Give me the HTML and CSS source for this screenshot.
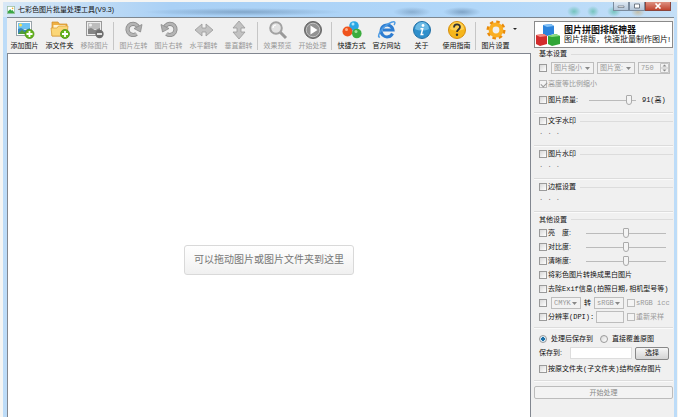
FILE: index.html
```html
<!DOCTYPE html>
<html lang="zh-CN">
<head>
    <meta charset="UTF-8">
    <meta name="viewport" content="width=device-width, initial-scale=1.0">
    <title>七彩色图片批量处理工具(V9.3)</title>
    <link rel="stylesheet" href="styles.css">
</head>
<body>
    <div class="window">
        <header class="titlebar">
            <svg class="app-icon" viewBox="0 0 10 10"><rect x="0.5" y="0.5" width="9" height="9" fill="#fff" stroke="#9cc0a4"/><path d="M1 7l3-3 2 2 1-1 2 3v1H1z" fill="#39a845"/><circle cx="7" cy="3" r="1" fill="#e9b32c"/></svg>
            <h1 class="title">七彩色图片批量处理工具(V9.3)</h1>
            <div class="window-buttons">
                <button class="win-btn" aria-label="最小化"><svg viewBox="0 0 8 6"><path d="M1 3h6v1.500H1z" fill="#fff" stroke="#56606c" stroke-width=".6"/></svg></button>
                <button class="win-btn" aria-label="最大化"><svg viewBox="0 0 8 6"><path d="M1.500 1h5v4h-5z" fill="#fff" stroke="#56606c" stroke-width=".8"/></svg></button>
                <button class="win-btn win-close" aria-label="关闭"><svg viewBox="0 0 8 6"><path d="M1.500 .5l5 5M6.500 .5l-5 5" stroke="#fff" stroke-width="1.600"/></svg></button>
            </div>
        </header>

        <div class="client">
            <main class="main">
                <nav class="toolbar">
                    <button class="tool">
                        <svg viewBox="0 0 20 20"><rect x="1.500" y="1.500" width="15" height="14" fill="#fff" stroke="#9aa4aa"/><path d="M3 3h12v6H3z" fill="#6fc3f2"/><circle cx="5.500" cy="5" r="1.500" fill="#ffe14d"/><path d="M3 14V9l3-1 4 2 5-2v6z" fill="#3b87b8"/><path d="M3 14l4-4 5 4z" fill="#4e9d3a"/><circle cx="14.500" cy="14" r="4.500" fill="#64b51c" stroke="#438b10" stroke-width=".7"/><path d="M14.500 11v6M11.500 14h6" stroke="#fff" stroke-width="1.800"/></svg>
                        <span>添加图片</span>
                    </button>
                    <button class="tool">
                        <svg viewBox="0 0 20 20"><path d="M2 4V2h6l1.500 2H17v12H2z" fill="#efb044" stroke="#cf8e28" stroke-width=".7"/><path d="M3.500 5h12v5h-12z" fill="#fff3cf"/><path d="M1 8h6l1.500-2H18l-1 10H2z" fill="#fbd678" stroke="#d99c34" stroke-width=".7"/><circle cx="15" cy="14" r="4.500" fill="#64b51c" stroke="#438b10" stroke-width=".7"/><path d="M15 11v6M12 14h6" stroke="#fff" stroke-width="1.800"/></svg>
                        <span>添文件夹</span>
                    </button>
                    <button class="tool" disabled>
                        <svg viewBox="0 0 20 20"><rect x="1.500" y="1.500" width="15" height="14" fill="#eee" stroke="#999"/><path d="M3 3h12v6H3z" fill="#bdbdbd"/><circle cx="5.500" cy="5" r="1.500" fill="#eee"/><path d="M3 14V9l3-1 4 2 5-2v6z" fill="#858585"/><circle cx="14.500" cy="14" r="4.200" fill="#6e6e6e"/><path d="M12 14h5" stroke="#fff" stroke-width="1.600"/></svg>
                        <span>移除图片</span>
                    </button>
                    <span class="separator"></span>
                    <button class="tool" disabled>
                        <svg viewBox="0 0 20 20"><path d="M13.600 12.800A5.600 5.600 0 1 1 14 6.500" fill="none" stroke="#8a8a8a" stroke-width="4.200" transform="rotate(14 9 9)"/><path d="M13.600 12.800A5.600 5.600 0 1 1 14 6.500" fill="none" stroke="#b4b4b4" stroke-width="2.600" transform="rotate(14 9 9)"/><path d="M18 4.500l-1.500 7.500-6.500-3.500z" fill="#aeaeae" stroke="#8a8a8a" stroke-width=".8"/></svg>
                        <span>图片左转</span>
                    </button>
                    <button class="tool" disabled>
                        <svg viewBox="0 0 20 20"><g transform="matrix(-1 0 0 1 20 0)"><path d="M13.600 12.800A5.600 5.600 0 1 1 14 6.500" fill="none" stroke="#8a8a8a" stroke-width="4.200" transform="rotate(14 9 9)"/><path d="M13.600 12.800A5.600 5.600 0 1 1 14 6.500" fill="none" stroke="#b4b4b4" stroke-width="2.600" transform="rotate(14 9 9)"/><path d="M18 4.500l-1.500 7.500-6.500-3.500z" fill="#aeaeae" stroke="#8a8a8a" stroke-width=".8"/></g></svg>
                        <span>图片右转</span>
                    </button>
                    <button class="tool" disabled>
                        <svg viewBox="0 0 20 20"><path d="M1 10l7-6v4h4V4l7 6-7 6v-4H8v4z" fill="#c2c2c2" stroke="#999" stroke-width=".8"/></svg>
                        <span>水平翻转</span>
                    </button>
                    <button class="tool" disabled>
                        <svg viewBox="0 0 20 20"><path d="M10 1l6 7h-4v4h4l-6 7-6-7h4V8H4z" fill="#c2c2c2" stroke="#999" stroke-width=".8"/></svg>
                        <span>垂直翻转</span>
                    </button>
                    <span class="separator"></span>
                    <button class="tool" disabled>
                        <svg viewBox="0 0 20 20"><path d="M12 12l6 6" stroke="#999" stroke-width="3"/><circle cx="8" cy="8" r="5.800" fill="#e2e2e2" stroke="#a2a2a2" stroke-width="2"/><path d="M5 8a3 3 0 0 1 3-3" fill="none" stroke="#fff" stroke-width="1.200"/></svg>
                        <span>效果预览</span>
                    </button>
                    <button class="tool" disabled>
                        <svg viewBox="0 0 20 20"><circle cx="10" cy="10" r="8.500" fill="#777" stroke="#666"/><circle cx="10" cy="10" r="6.800" fill="#929292" stroke="#c4c4c4"/><path d="M7.500 5.500v9l7-4.500z" fill="#fff"/></svg>
                        <span>开始处理</span>
                    </button>
                    <span class="separator"></span>
                    <button class="tool">
                        <svg viewBox="0 0 20 20"><circle cx="12" cy="6" r="4.800" fill="#2aa7e4"/><circle cx="11" cy="4" r="1.500" fill="#a7e4ff"/><circle cx="5.500" cy="11.500" r="5" fill="#f0531c"/><circle cx="4.500" cy="9.500" r="1.500" fill="#ffb08a"/><circle cx="14.800" cy="13.500" r="4.800" fill="#3cac3e"/><circle cx="14" cy="11.500" r="1.500" fill="#a8e29a"/></svg>
                        <span>快捷方式</span>
                    </button>
                    <button class="tool">
                        <svg viewBox="0 0 20 20"><path d="M15.500 13.500A6 6 0 1 1 16 10H6" fill="none" stroke="#2e7dd1" stroke-width="3"/><path d="M3 17C-1 18 4 8 11 4s8-2 6 1" fill="none" stroke="#4d9be4" stroke-width="1.500"/></svg>
                        <span>官方网站</span>
                    </button>
                    <button class="tool">
                        <svg viewBox="0 0 20 20"><circle cx="10" cy="10" r="8.500" fill="#2f8fcb" stroke="#216fa5"/><path d="M3 9a7 7 0 0 1 14 0c-4 2-10 2-14 0z" fill="#6bb9e4"/><circle cx="11" cy="5.500" r="1.400" fill="#fff"/><path d="M8.500 8.800h2.200l-1.500 5.700h2.300" fill="none" stroke="#fff" stroke-width="1.500"/></svg>
                        <span>关于</span>
                    </button>
                    <button class="tool">
                        <svg viewBox="0 0 20 20"><circle cx="10" cy="10" r="8.500" fill="#f6b61b" stroke="#d68e0c"/><path d="M3 9a7 7 0 0 1 14 0c-4 2-10 2-14 0z" fill="#ffd152"/><path d="M7 7.500c0-4 6-4 6-.5 0 2.500-3 2.500-3 5" fill="none" stroke="#333" stroke-width="1.800"/><circle cx="10" cy="14.800" r="1.200" fill="#333"/></svg>
                        <span>使用指南</span>
                    </button>
                    <span class="separator"></span>
                    <button class="tool tool-menu">
                        <svg viewBox="0 0 20 20"><circle cx="10" cy="10" r="7.500" fill="none" stroke="#e98a0b" stroke-width="4" stroke-dasharray="3.200 2.690"/><circle cx="10" cy="10" r="5.400" fill="none" stroke="#faae22" stroke-width="4"/></svg>
                        <span>图片设置</span>
                    </button>
                </nav>
                <div class="canvas">
                    <div class="drop-hint">可以拖动图片或图片文件夹到这里</div>
                </div>
            </main>

            <aside class="sidebar">
                <a class="banner" href="#">
                    <svg class="banner-icon" viewBox="0 0 26 24"><path d="M8 2l8-1 3 2v8l-7 2-4-2z" fill="#2c83dc"/><path d="M8 2l8-1 3 2-7 1z" fill="#82c1f6"/><path d="M1 12l8-1 3 2v8l-7 2-4-2z" fill="#d22c2c"/><path d="M1 12l8-1 3 2-7 1z" fill="#f48a80"/><path d="M13 13l8-2 4 2v8l-8 2-4-2z" fill="#31a637"/><path d="M13 13l8-2 4 2-8 1z" fill="#8edb80"/></svg>
                    <span class="banner-text"><strong>图片拼图排版神器</strong><span>图片排版，快速批量制作图片!</span></span>
                </a>

                <section class="group basic">
                    <h2 class="legend">基本设置</h2>
                    <div class="row">
                        <input type="checkbox" aria-label="启用缩放">
                        <select class="select-wide" aria-label="缩放方式" disabled><option>图片缩小</option></select>
                        <select class="select-size" aria-label="尺寸类型" disabled><option>图片宽:</option></select>
                        <input class="spin mono" type="text" value="750" aria-label="尺寸" disabled>
                    </div>
                    <div class="row"><label class="check off"><input type="checkbox" checked disabled>高度等比例缩小</label></div>
                    <div class="row">
                        <label class="check"><input type="checkbox">图片质量:</label>
                        <input class="slider quality" type="range" min="0" max="100" value="91" aria-label="图片质量">
                        <span class="mono">91(高)</span>
                    </div>
                </section>

                <section class="group mark">
                    <h2 class="legend"><label class="check"><input type="checkbox">文字水印</label></h2>
                    <p class="dots mono">. . .</p>
                </section>
                <section class="group mark">
                    <h2 class="legend"><label class="check"><input type="checkbox">图片水印</label></h2>
                    <p class="dots mono">. . .</p>
                </section>
                <section class="group mark">
                    <h2 class="legend"><label class="check"><input type="checkbox">边框设置</label></h2>
                    <p class="dots mono">. . .</p>
                </section>

                <section class="group other">
                    <h2 class="legend">其他设置</h2>
                    <div class="row"><label class="check"><input type="checkbox">亮　度:</label><input class="slider" type="range" aria-label="亮度"></div>
                    <div class="row"><label class="check"><input type="checkbox">对比度:</label><input class="slider" type="range" aria-label="对比度"></div>
                    <div class="row"><label class="check"><input type="checkbox">清晰度:</label><input class="slider" type="range" aria-label="清晰度"></div>
                    <div class="row"><label class="check"><input type="checkbox">将彩色图片转换成黑白图片</label></div>
                    <div class="row"><label class="check"><input type="checkbox">去除<span class="mono">Exif</span>信息<span class="mono">(</span>拍照日期<span class="mono">,</span>相机型号等<span class="mono">)</span></label></div>
                    <div class="row">
                        <input type="checkbox" aria-label="转换色彩">
                        <select class="select-color mono" aria-label="源色彩" disabled><option>CMYK</option></select>
                        <span>转</span>
                        <select class="select-color mono" aria-label="目标色彩" disabled><option>sRGB</option></select>
                        <label class="check mono off"><input type="checkbox" disabled>sRGB icc</label>
                    </div>
                    <div class="row">
                        <label class="check dpi"><input type="checkbox">分辨率<span class="mono">(DPI):</span></label>
                        <input class="dpi-value" type="text" aria-label="DPI" disabled>
                        <label class="check off"><input type="checkbox" disabled>重新采样</label>
                    </div>
                </section>

                <section class="group save">
                    <div class="row save-mode">
                        <label class="check"><input type="radio" name="save" checked>处理后保存到</label>
                        <label class="check"><input type="radio" name="save">直接覆盖原图</label>
                    </div>
                    <div class="row">
                        <label class="path-label" for="path">保存到:</label>
                        <input class="path" id="path" type="text">
                        <button class="browse">选择</button>
                    </div>
                    <div class="row row-tall"><label class="check"><input type="checkbox">按原文件夹<span class="mono">(</span>子文件夹<span class="mono">)</span>结构保存图片</label></div>
                </section>

                <button class="start" disabled>开始处理</button>
            </aside>
        </div>
    </div>
</body>
</html>
```
FILE: styles.css
```css
* {
    box-sizing: border-box;
}
body {
    margin: 0;
    background: #f5f5f3;
    color: #111;
    font-family: "Liberation Sans", "Noto Sans CJK SC", sans-serif;
    font-size: 7px;
    line-height: 10px;
}
button, input, select {
    margin: 0;
    padding: 0;
    font: inherit;
    color: inherit;
}
h1, h2, p {
    margin: 0;
    font-size: 7px;
    font-weight: normal;
}
.mono {
    font-family: "Liberation Mono", "Noto Sans CJK SC", monospace;
}
.window {
    min-height: 100vh;
    padding: 2px 1px 0 3px;
    display: flex;
    flex-direction: column;
}

/* Title bar, glass with the desktop showing through */
.titlebar {
    display: flex;
    align-items: center;
    height: 15px;
    padding-left: 4px;
    gap: 3px;
    background:
        radial-gradient(closest-side, rgba(80, 115, 150, 0.45), transparent) 140px 6px / 200px 8px no-repeat,
        radial-gradient(closest-side, rgba(80, 115, 150, 0.4), transparent) 390px 5px / 38px 10px no-repeat,
        radial-gradient(closest-side, rgba(80, 115, 150, 0.5), transparent) 440px 5px / 38px 10px no-repeat,
        radial-gradient(closest-side, rgba(70, 180, 150, 0.6), transparent) 564px 4px / 14px 11px no-repeat,
        radial-gradient(closest-side, rgba(70, 180, 150, 0.6), transparent) 584px 4px / 12px 11px no-repeat,
        radial-gradient(closest-side, rgba(70, 180, 150, 0.6), transparent) 604px 4px / 14px 11px no-repeat,
        radial-gradient(closest-side, rgba(200, 160, 90, 0.5), transparent) 628px 5px / 14px 10px no-repeat,
        linear-gradient(to right, #d8e8f6, #a9d0f5 25%, #b1d7f9 70%, #c4dff7);
}
.app-icon {
    width: 8px;
    height: 8px;
}
.title {
    flex: 1;
}
.window-buttons {
    display: flex;
    align-self: flex-start;
    padding-right: 6px;
}
.win-btn {
    width: 16px;
    height: 9px;
    display: flex;
    align-items: center;
    justify-content: center;
    border: 1px solid #7c8c9e;
    border-top: 0;
    background: linear-gradient(#dde8f3, #b5c6d8);
}
.win-btn svg {
    width: 8px;
    height: 6px;
}
.win-close {
    width: 26px;
    border-color: #8c453c;
    background: linear-gradient(#dd9080, #c04530);
}

/* Client area */
.client {
    flex: 1;
    display: flex;
    border-left: 4px solid #bddcf8;
    border-right: 3px solid #bddcf8;
    background: #f0f0f0;
}
.main {
    flex: 1;
    min-width: 0;
    display: flex;
    flex-direction: column;
    border-top: 1px solid #7d8790;
}
.toolbar {
    display: flex;
    align-items: center;
    height: 35px;
}
.tool {
    width: 35px;
    display: flex;
    flex-direction: column;
    align-items: center;
    gap: 1px;
    border: 0;
    background: none;
    position: relative;
    white-space: nowrap;
}
.tool svg {
    width: 20px;
    height: 20px;
}
.tool:disabled {
    color: #999;
}
.tool-menu::after {
    content: "";
    position: absolute;
    right: -4px;
    top: 8px;
    border: 2px solid transparent;
    border-top-color: #222;
}
.separator {
    width: 1px;
    height: 28px;
    margin: 0 2px 0 1px;
    background: #c6c6c6;
}
.canvas {
    flex: 1;
    display: flex;
    align-items: center;
    justify-content: center;
    padding-top: 48px;
    border: 1px solid #828790;
    border-bottom: 0;
    background: #fff;
}
.drop-hint {
    padding: 9px;
    border: 1px solid #d9d9d9;
    border-radius: 3px;
    background: linear-gradient(#fff, #f0f0f0);
    color: #777;
    font-size: 10px;
}

/* Settings panel */
.sidebar {
    width: 143px;
    padding: 3px 1px 0 3px;
    border-top: 1px solid #7d8790;
    white-space: nowrap;
}
.banner {
    display: flex;
    align-items: center;
    height: 27px;
    border: 1px solid #8a8a8a;
    background: #fff;
    color: #111;
    text-decoration: none;
    gap: 3px;
}
.banner-icon {
    width: 26px;
    height: 24px;
    flex: none;
}
.banner-text {
    display: flex;
    flex-direction: column;
    font-size: 8px;
}
.banner-text strong {
    font-size: 9px;
}
.group {
    padding-left: 5px;
    border-bottom: 1px solid #dcdcdc;
    box-shadow: 0 1px #fafafa;
}
.legend {
    display: flex;
    align-items: center;
    gap: 4px;
    height: 12px;
}
.legend::after {
    content: "";
    flex: 1;
    height: 1px;
    background: #dcdcdc;
}
.row {
    display: flex;
    align-items: center;
    gap: 3px;
    height: 14px;
}
.check {
    display: flex;
    align-items: center;
}
.off {
    color: #999;
}
input[type="checkbox"], input[type="radio"] {
    appearance: none;
    width: 8px;
    height: 8px;
    margin-right: 1px;
    flex: none;
    border: 1px solid #9a9a9a;
    background: linear-gradient(135deg, #d8d8d8, #fff);
}
input[type="radio"] {
    border-radius: 50%;
    margin-right: 4px;
}
input[type="radio"]:checked {
    background: radial-gradient(#1b6fa8 40%, #d9ebf6 50%);
}
input[type="checkbox"]:disabled {
    border-color: #bbb;
    background: #f4f4f4;
}
input[type="checkbox"]:checked::before {
    content: "";
    display: block;
    width: 5px;
    height: 3px;
    margin: 1px;
    border: solid #999;
    border-width: 0 0 1px 1px;
    transform: rotate(-45deg);
}
select {
    appearance: none;
    height: 12px;
    padding-left: 2px;
    border: 1px solid #bdbdbd;
    border-radius: 0;
    background: #f2f2f2 url("data:image/svg+xml,%3Csvg xmlns='http://www.w3.org/2000/svg' viewBox='0 0 5 3'%3E%3Cpath d='M0 0h5L2.5 3z' fill='%23888'/%3E%3C/svg%3E") no-repeat right 3px center / 5px 3px;
    color: #999;
}
select:disabled {
    opacity: 1;
}
.select-wide {
    width: 43px;
}
.select-size {
    width: 38px;
}
.select-color {
    width: 30px;
}
.spin, .dpi-value, .path {
    border: 1px solid #bdbdbd;
    height: 12px;
    min-width: 0;
    background: #f2f2f2;
}
.spin {
    width: 32px;
    padding-left: 2px;
    color: #999;
    background: #f2f2f2 url("data:image/svg+xml,%3Csvg xmlns='http://www.w3.org/2000/svg' viewBox='0 0 9 10'%3E%3Cpath d='M.5.5h8v9h-8zM.5 5h8' fill='none' stroke='%23c4c4c4'/%3E%3Cpath d='M2.500 3.500l2-2 2 2zM2.500 6.500l2 2 2-2z' fill='%23888'/%3E%3C/svg%3E") no-repeat right center / 9px 10px;
}
.dpi-value {
    width: 28px;
}
.dpi {
    width: 54px;
}
.slider {
    appearance: none;
    width: 80px;
    height: 12px;
    margin-left: auto;
    margin-right: 7px;
    background: linear-gradient(#bbb, #bbb) no-repeat center / 100% 1px;
}
.slider::-webkit-slider-thumb {
    appearance: none;
    width: 6px;
    height: 10px;
    border: 1px solid #aaa;
    border-radius: 1px 1px 3px 3px;
    background: #f4f4f4;
}
.quality {
    width: 47px;
    margin-left: 8px;
    margin-right: 3px;
}
.basic {
    padding-bottom: 4px;
}
.basic .row {
    height: 16px;
}
.mark {
    height: 33px;
    padding-top: 2px;
}
.dots {
    color: #777;
}
.other {
    padding-top: 1px;
    padding-bottom: 3px;
}
.other .legend {
    height: 13px;
}
.save {
    padding-top: 4px;
    padding-bottom: 2px;
}
.save-mode {
    gap: 7px;
}
.row-tall {
    height: 18px;
}
.path {
    width: 62px;
    background: #fff;
    border-color: #ddd;
}
.path-label {
    width: 28px;
}
.browse {
    width: 34px;
    height: 13px;
    border: 1px solid #888;
    border-radius: 2px;
    background: linear-gradient(#f6f6f6, #d4d4d4);
}
.start {
    width: 100%;
    height: 13px;
    margin-top: 5px;
    border: 1px solid #bcbcbc;
    border-radius: 2px;
    background: #f3f3f3;
    color: #888;
}
```
